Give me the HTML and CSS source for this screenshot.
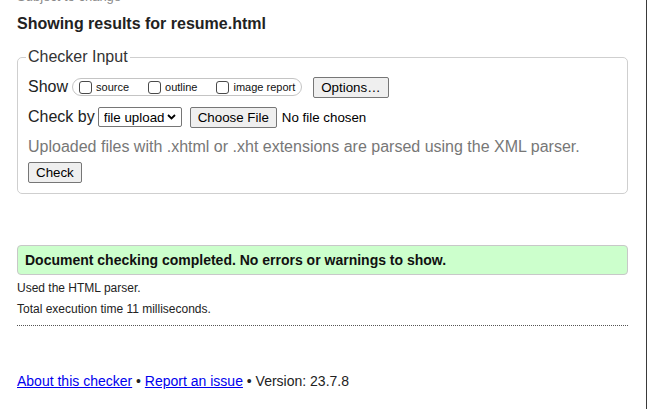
FILE: index.html
```html
<!DOCTYPE html>
<html lang="en">
<head>
<meta charset="utf-8">
<title>Showing results for resume.html - Nu Html Checker</title>
<link rel="stylesheet" href="styles.css">
</head>
<body>
<div class="page">
  <div class="content">
    <p class="subject">Subject to change</p>
    <h2 class="heading">Showing results for resume.html</h2>
    <fieldset class="checker">
      <legend class="legend">Checker Input</legend>
      <div class="row">
        <span class="label">Show</span>
        <span class="pill">
          <label class="opt"><input type="checkbox" class="cb"><span>source</span></label>
          <label class="opt"><input type="checkbox" class="cb"><span>outline</span></label>
          <label class="opt"><input type="checkbox" class="cb"><span>image report</span></label>
        </span>
        <button type="button" class="btn btn-options">Options…</button>
      </div>
      <div class="row">
        <span class="label label-by">Check by</span>
        <span class="select-wrap">
          <select class="select"><option>file upload</option></select>
          <svg class="chev" width="9" height="6" viewBox="0 0 9 6"><path d="M1 1 L4.5 4.5 L8 1" fill="none" stroke="#000" stroke-width="1.8"/></svg>
        </span>
        <button type="button" class="btn btn-file">Choose File</button>
        <span class="nofile">No file chosen</span>
      </div>
      <div class="row">
        <span class="hint">Uploaded files with .xhtml or .xht extensions are parsed using the XML parser.</span>
      </div>
      <div class="row-check">
        <button type="button" class="btn">Check</button>
      </div>
    </fieldset>
    <div class="success">Document checking completed. No errors or warnings to show.</div>
    <p class="meta">Used the HTML parser.</p>
    <p class="meta">Total execution time 11 milliseconds.</p>
    <hr class="rule">
    <p class="footer"><a href="#" class="link">About this checker</a> • <a href="#" class="link">Report an issue</a> • Version: 23.7.8</p>
  </div>
</div>
</body>
</html>
```
FILE: styles.css
```css
html, body {
  margin: 0;
  padding: 0;
  background: #fff;
}
body {
  font-family: "Liberation Sans", Arial, sans-serif;
  color: #222;
}
.page {
  width: 646px;
  height: 409px;
  border-right: 1px solid #3a3a3a;
  overflow: hidden;
}
.content {
  width: 611px;
  padding-left: 17px;
}
.subject {
  margin: -11px 0 0;
  font-size: 13px;
  line-height: 16px;
  color: #8a8a8a;
}
.heading {
  margin: 9px 0 0;
  font-size: 16px;
  line-height: 20px;
  font-weight: bold;
  color: #222;
}
.checker {
  box-sizing: border-box;
  width: 611px;
  margin: 14px 0 0;
  padding: 6px 10px 10px;
  border: 1px solid #cfcfcf;
  border-radius: 5px;
  min-inline-size: 0;
}
.legend {
  padding: 0 2px;
  margin-left: -2px;
  font-size: 16px;
  line-height: 18px;
  color: #333;
}
.row {
  display: flex;
  align-items: center;
  height: 30px;
}
.label {
  font-size: 16px;
  margin-right: 4px;
}
.label-by {
  margin-right: 3px;
}
.pill {
  box-sizing: border-box;
  display: flex;
  align-items: center;
  height: 18px;
  border: 1px solid #c4c4c4;
  border-radius: 9px;
  padding: 0 6px;
  gap: 19px;
}
.opt {
  display: flex;
  align-items: center;
  gap: 4px;
  font-size: 11px;
  color: #111;
}
.cb {
  appearance: none;
  -webkit-appearance: none;
  box-sizing: border-box;
  margin: 0;
  width: 13px;
  height: 13px;
  border: 1px solid #4a4a4a;
  border-radius: 3px;
  background: #fff;
}
.btn {
  box-sizing: border-box;
  height: 21px;
  padding: 0 7px;
  border: 1px solid #767676;
  border-radius: 2px;
  background: #efefef;
  font-family: "Liberation Sans", Arial, sans-serif;
  font-size: 13.33px;
  line-height: 19px;
  color: #000;
}
.btn-options {
  margin-left: 11px;
}
.select-wrap {
  position: relative;
  display: inline-flex;
}
.select {
  appearance: none;
  -webkit-appearance: none;
  box-sizing: border-box;
  width: 84px;
  height: 20px;
  margin: 0;
  padding: 0 0 0 5px;
  border: 1px solid #767676;
  border-radius: 2px;
  background: #fff;
  font-family: "Liberation Sans", Arial, sans-serif;
  font-size: 13.33px;
  color: #000;
}
.chev {
  position: absolute;
  right: 6px;
  top: 7px;
  pointer-events: none;
}
.btn-file {
  margin-left: 8px;
}
.nofile {
  margin-left: 5px;
  font-size: 13.33px;
  color: #000;
}
.hint {
  font-size: 16px;
  color: #777;
}
.row-check {
  display: flex;
}
.success {
  box-sizing: border-box;
  height: 30px;
  margin-top: 51px;
  padding: 0 7px;
  border: 1px solid #c8c8c8;
  border-radius: 4px;
  background: #ccffcc;
  font-size: 14px;
  line-height: 28px;
  font-weight: bold;
  color: #111;
}
.meta {
  margin: 5px 0 0;
  font-size: 12px;
  line-height: 16px;
  color: #222;
}
.rule {
  height: 0;
  margin: 8px 0 0;
  border: 0;
  border-top: 1px dotted #555;
}
.footer {
  margin: 46px 0 0;
  font-size: 14px;
  line-height: 18px;
  color: #222;
}
.link {
  color: #0000ee;
}
```
